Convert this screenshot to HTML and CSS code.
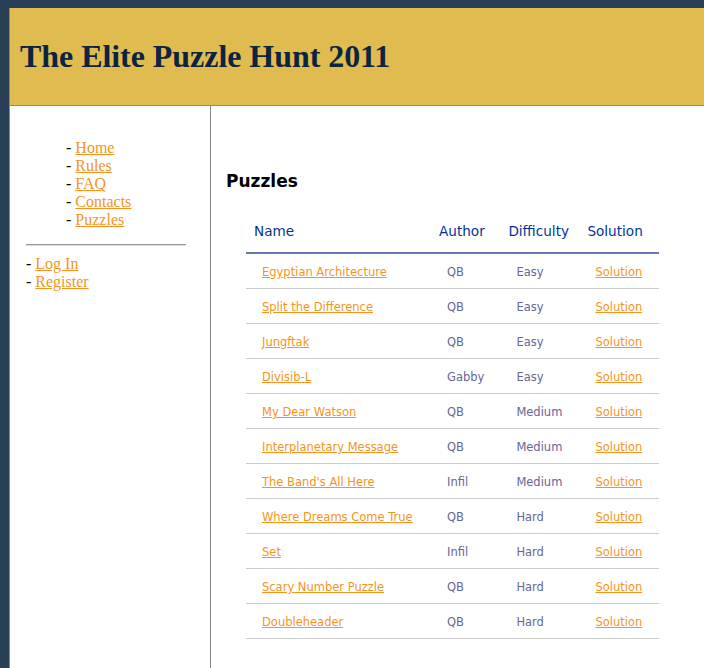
FILE: index.html
```html
<!DOCTYPE html>
<html>
<head>
<meta charset="utf-8">
<title>The Elite Puzzle Hunt 2011</title>
<link rel="stylesheet" href="styles.css">
</head>
<body>
<div class="wrapper">
  <div class="header"><h1 class="title">The Elite Puzzle Hunt 2011</h1></div>
  <div class="columns">
    <div class="sidebar">
      <ul class="nav">
        <li>- <a href="#">Home</a></li>
        <li>- <a href="#">Rules</a></li>
        <li>- <a href="#">FAQ</a></li>
        <li>- <a href="#">Contacts</a></li>
        <li>- <a href="#">Puzzles</a></li>
      </ul>
      <hr class="divider">
      <ul class="account">
        <li>- <a href="#">Log In</a></li>
        <li>- <a href="#">Register</a></li>
      </ul>
    </div>
    <div class="main">
      <h2 class="heading">Puzzles</h2>
      <table class="puzzles">
        <thead>
          <tr><th class="c-name">Name</th><th class="c-author">Author</th><th class="c-diff">Difficulty</th><th class="c-sol">Solution</th></tr>
        </thead>
        <tbody>
          <tr><td><a href="#">Egyptian Architecture</a></td><td>QB</td><td>Easy</td><td><a href="#">Solution</a></td></tr>
          <tr><td><a href="#">Split the Difference</a></td><td>QB</td><td>Easy</td><td><a href="#">Solution</a></td></tr>
          <tr><td><a href="#">Jungftak</a></td><td>QB</td><td>Easy</td><td><a href="#">Solution</a></td></tr>
          <tr><td><a href="#">Divisib-L</a></td><td>Gabby</td><td>Easy</td><td><a href="#">Solution</a></td></tr>
          <tr><td><a href="#">My Dear Watson</a></td><td>QB</td><td>Medium</td><td><a href="#">Solution</a></td></tr>
          <tr><td><a href="#">Interplanetary Message</a></td><td>QB</td><td>Medium</td><td><a href="#">Solution</a></td></tr>
          <tr><td><a href="#">The Band's All Here</a></td><td>Infil</td><td>Medium</td><td><a href="#">Solution</a></td></tr>
          <tr><td><a href="#">Where Dreams Come True</a></td><td>QB</td><td>Hard</td><td><a href="#">Solution</a></td></tr>
          <tr><td><a href="#">Set</a></td><td>Infil</td><td>Hard</td><td><a href="#">Solution</a></td></tr>
          <tr><td><a href="#">Scary Number Puzzle</a></td><td>QB</td><td>Hard</td><td><a href="#">Solution</a></td></tr>
          <tr><td><a href="#">Doubleheader</a></td><td>QB</td><td>Hard</td><td><a href="#">Solution</a></td></tr>
        </tbody>
      </table>
    </div>
  </div>
</div>
</body>
</html>
```
FILE: styles.css
```css
html, body {
  height: 100%;
}
body {
  margin: 0;
  padding: 8px 0 0 9px;
  box-sizing: border-box;
  background: #283f55;
  font-family: "Liberation Serif", serif;
  font-size: 16px;
  overflow: hidden;
  display: flex;
  flex-direction: column;
}
a {
  color: #f7941d;
}
.wrapper {
  background: #fff;
  border-left: 1px solid #888;
  flex: 1;
  display: flex;
  flex-direction: column;
  min-width: 0;
}
.header {
  background: #e0bb50;
  height: 97px;
  flex: none;
  border-bottom: 1px solid #888;
  display: flex;
  align-items: center;
  padding-left: 10px;
}
.title {
  margin: 0;
  font-family: "Liberation Serif", serif;
  font-size: 32px;
  font-weight: bold;
  color: #0d2440;
  letter-spacing: -0.05px;
}
.columns {
  display: flex;
  flex: 1;
}
.sidebar {
  width: 184px;
  padding: 33px 0 0 16px;
  border-right: 1px solid #888;
}
.nav, .account {
  list-style: none;
  margin: 0;
  padding: 0;
  line-height: 18px;
}
.nav {
  padding-left: 40px;
}
.divider {
  width: 160px;
  margin: 15px 0 9px 0;
  border: 0;
  border-top: 1px solid #999;
  border-bottom: 1px solid #ddd;
}
.main {
  padding: 65px 0 0 15px;
}
.heading {
  margin: 0;
  font-family: "DejaVu Sans", sans-serif;
  font-size: 17px;
  font-weight: bold;
  line-height: 20px;
  color: #000;
}
.puzzles {
  margin: 21px 0 0 20px;
  width: 413px;
  border-collapse: collapse;
  text-align: left;
  font-family: "DejaVu Sans", sans-serif;
  font-size: 11.5px;
}
.puzzles th {
  font-size: 13.6px;
  font-weight: normal;
  color: #039;
  padding: 9px 8px 11px;
  line-height: 20px;
  border-bottom: 2px solid #6678b1;
}
.puzzles td {
  color: #669;
  padding: 9px 16px 7px;
  line-height: 18px;
  border-bottom: 1px solid #ccc;
}
.c-name { width: 169px; }
.c-author { width: 53px; }
.c-diff { width: 63px; }
```
